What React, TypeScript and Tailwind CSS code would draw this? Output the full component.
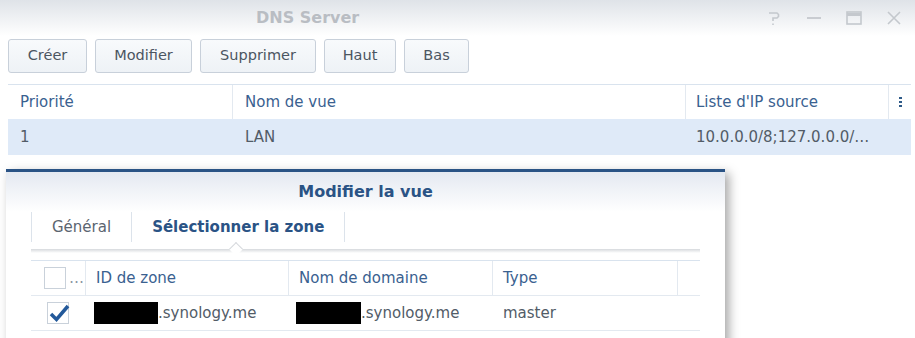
import React from "react";

const font = { fontFamily: '"DejaVu Sans", Verdana, sans-serif' };

function Btn({ label, w }: { label: string; w: string }) {
  return (
    <button
      className={`h-[34px] ${w} rounded-[3px] border border-[#c8d0da] bg-gradient-to-b from-[#f8fafc] to-[#eef2f6] text-[14.5px] text-[#4b5561]`}
    >
      {label}
    </button>
  );
}

function Redacted({ w }: { w: string }) {
  return <span className={`inline-block h-[22px] ${w} bg-black align-middle`} />;
}

export default function App() {
  return (
    <div className="relative h-[338px] w-[915px] overflow-hidden bg-white" style={font}>
      {/* title bar */}
      <div className="flex h-[36px] items-center bg-gradient-to-b from-[#dfe3e8] to-white">
        <div className="ml-[256px] text-[16px] font-bold text-[#b9bdc3]">DNS Server</div>
        <div className="ml-auto mr-[12px] flex items-center gap-[22px] text-[#c4c8cd]">
          <svg width="18" height="18" viewBox="0 0 18 18" fill="none" stroke="currentColor" strokeWidth="1.6">
            <path d="M4 4h8l1.5 1.5v2L12 9H8v3" />
            <path d="M8 14.5v1.5" />
          </svg>
          <svg width="18" height="18" viewBox="0 0 18 18" stroke="currentColor" strokeWidth="1.8">
            <path d="M2 9h14" />
          </svg>
          <svg width="18" height="18" viewBox="0 0 18 18" fill="none" stroke="currentColor" strokeWidth="1.6">
            <rect x="2" y="3" width="14" height="12" />
            <path d="M2 5.5h14" strokeWidth="3" />
          </svg>
          <svg width="18" height="18" viewBox="0 0 18 18" stroke="currentColor" strokeWidth="1.6">
            <path d="M3 3l12 12M15 3L3 15" />
          </svg>
        </div>
      </div>

      {/* toolbar */}
      <div className="ml-[8px] mt-[3px] flex gap-[8px]">
        <Btn label="Créer" w="w-[79px]" />
        <Btn label="Modifier" w="w-[97px]" />
        <Btn label="Supprimer" w="w-[116px]" />
        <Btn label="Haut" w="w-[72px]" />
        <Btn label="Bas" w="w-[65px]" />
      </div>

      {/* main grid */}
      <div className="ml-[8px] mt-[11px] w-[903px] border-t border-[#d9e3ee] text-[15px]">
        <div className="flex h-[34px] items-center text-[#3a6190]">
          <div className="flex h-full w-[225px] items-center border-r border-[#e3e9f0] pl-[12px]">Priorité</div>
          <div className="flex h-full w-[453px] items-center border-r border-[#e3e9f0] pl-[12px]">Nom de vue</div>
          <div className="flex h-full w-[203px] items-center border-r border-[#e3e9f0] pl-[10px]">Liste d'IP source</div>
          <div className="flex h-full flex-1 items-center justify-center">
            <div className="flex flex-col gap-[2px]">
              <span className="h-[2px] w-[3px] bg-[#2e5a88]" />
              <span className="h-[2px] w-[3px] bg-[#2e5a88]" />
              <span className="h-[2px] w-[3px] bg-[#2e5a88]" />
            </div>
          </div>
        </div>
        <div className="flex h-[36px] items-center bg-[#dfeaf8] text-[#525c67]">
          <div className="w-[225px] pl-[12px]">1</div>
          <div className="w-[453px] pl-[12px]">LAN</div>
          <div className="w-[203px] pl-[10px]">10.0.0.0/8;127.0.0.0/…</div>
        </div>
      </div>

      {/* dialog */}
      <div className="ml-[6px] mt-[14px] w-[719px] border-t-[3px] border-[#2a5385] bg-white shadow-[4px_4px_10px_rgba(0,0,0,0.35)]">
        <div className="flex h-[40px] items-center justify-center bg-gradient-to-b from-[#e4e9f1] to-white text-[16px] font-bold text-[#2a5385]">
          Modifier la vue
        </div>
        <div className="mx-[25px] flex h-[30px] items-stretch text-[15px]">
          <div className="flex items-center border-x border-[#dce3eb] px-[20px] text-[#5b6570]">Général</div>
          <div className="flex items-center border-r border-[#dce3eb] px-[20px] font-bold text-[#2a5385]">
            Sélectionner la zone
          </div>
        </div>
        <div className="relative mx-[25px] mt-[7px] h-[4px] bg-gradient-to-b from-[#d6d9dd] to-white">
          <div className="absolute left-[200px] top-[-5px] h-[10px] w-[10px] rotate-45 border-l border-t border-[#d6d9dd] bg-white" />
        </div>
        <div className="mx-[25px] mt-[7px] border-t border-[#d9e3ee] text-[15px]">
          <div className="flex h-[35px] items-center border-b border-[#e3e9f0] text-[#3a6190]">
            <div className="flex h-full w-[55px] items-center border-r border-[#e3e9f0] pl-[13px]">
              <span className="h-[22px] w-[22px] border border-[#c9d1da] bg-white" />
              <span className="ml-[3px] text-[#8a96a3]">…</span>
            </div>
            <div className="flex h-full w-[203px] items-center border-r border-[#e3e9f0] pl-[10px]">ID de zone</div>
            <div className="flex h-full w-[204px] items-center border-r border-[#e3e9f0] pl-[10px]">Nom de domaine</div>
            <div className="flex h-full w-[185px] items-center border-r border-[#e3e9f0] pl-[10px]">Type</div>
          </div>
          <div className="flex h-[35px] items-center border-b border-[#e3e9f0] text-[#525c67]">
            <div className="flex w-[55px] items-center pl-[16px]">
              <span className="relative h-[22px] w-[22px] border border-[#c9d1da] bg-white">
                <svg width="22" height="20" viewBox="0 0 22 20" className="absolute left-[0px] top-[0px]">
                  <path d="M3 11l5.5 5.5L20 3" fill="none" stroke="#23599a" strokeWidth="3.5" />
                </svg>
              </span>
            </div>
            <div className="flex w-[203px] items-center pl-[8px]">
              <Redacted w="w-[64px]" />
              <span>.synology.me</span>
            </div>
            <div className="flex w-[204px] items-center pl-[7px]">
              <Redacted w="w-[65px]" />
              <span>.synology.me</span>
            </div>
            <div className="w-[185px] pl-[10px]">master</div>
          </div>
        </div>
        <div className="h-[20px]" />
      </div>
    </div>
  );
}
